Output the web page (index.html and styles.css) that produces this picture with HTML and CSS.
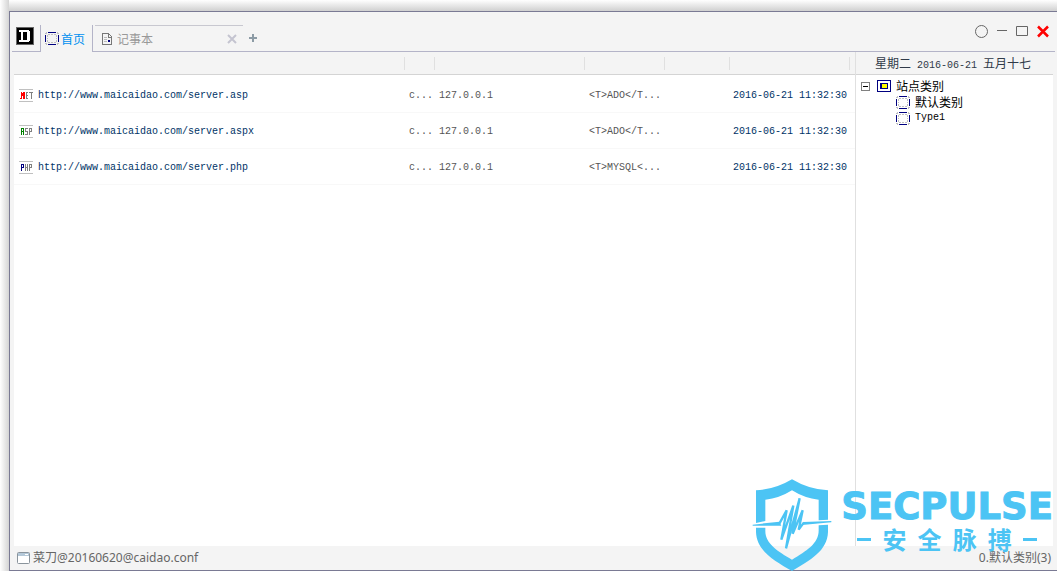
FILE: index.html
```html
<!DOCTYPE html>
<html lang="zh-CN">
<head>
  <meta charset="UTF-8" />
  <title>菜刀</title>
  <link rel="stylesheet" href="styles.css">
</head>
<body>

  <!-- shared icons -->
  <svg class="defs" aria-hidden="true">
    <symbol id="dotted" viewBox="0 0 14 13" shape-rendering="crispEdges">
      <path d="M3 .5h8M3 12.500h8M.5 3v7M13.500 3v7" stroke="#000080" fill="none" />
      <path d="M1 .5h1M12 .5h1M1 12.500h1M12 12.500h1M0 1.500h2M12 1.500h2M0 11.500h2M12 11.500h2M3 2.500h2M6 2.500h2M9 2.500h2M3 10.500h2M6 10.500h2M9 10.500h2M2.500 3v2M2.500 6v1M2.500 8v2M11.500 3v2M11.500 6v1M11.500 8v2" stroke="#c0c0c0" fill="none" />
    </symbol>
  </svg>

  <div class="window">
    <header class="titlebar">
      <button class="app-btn" aria-label="菜单">
        <svg width="18" height="18" viewBox="0 0 18 18" shape-rendering="crispEdges">
          <path d="M0 0h18v18H0z" fill="#666" />
          <path d="M1 1h16v16H1z" />
          <path d="M3 3h10v1h1v10h-1v1H3v-2h2V5H3zM7 5v8h4V5z" fill="#fff" fill-rule="evenodd" />
        </svg>
      </button>
      <nav class="tabs">
        <button class="tab tab-home">
          <svg width="14" height="13"><use href="#dotted" /></svg>首页
        </button>
        <div class="tab-strip">
          <div class="tab tab-note">
            <button class="tab-name">
              <svg width="10" height="12" viewBox="0 0 10 12" shape-rendering="crispEdges">
                <path d="M.5 .5h6l3 3v8h-9z" fill="none" stroke="#777" />
                <path d="M6.500 1v3H9" fill="none" stroke="#777" />
                <path d="M2 4.500h3M2 6.500h3M2 8.500h3" stroke="#bbb" />
                <path d="M6 7h2v2H6z" fill="#000080" />
              </svg>记事本
            </button>
            <button class="tab-close" aria-label="关闭标签">
              <svg width="10" height="10" viewBox="0 0 10 10"><path d="M1 1l8 8M9 1l-8 8" stroke="#c4c4d0" stroke-width="2" /></svg>
            </button>
          </div>
          <button class="tab-add" aria-label="新标签">
            <svg width="8" height="8" viewBox="0 0 8 8" shape-rendering="crispEdges"><path d="M4 0v8M0 4h8" stroke="#8c9ba5" stroke-width="2" /></svg>
          </button>
        </div>
      </nav>
      <div class="controls">
        <button aria-label="置顶"><svg width="13" height="13" viewBox="0 0 13 13"><circle cx="6.500" cy="6.500" r="6" fill="none" stroke="#666" /></svg></button>
        <button aria-label="最小化"><svg width="10" height="13" viewBox="0 0 10 13"><path d="M0 5.500h10" stroke="#666" /></svg></button>
        <button aria-label="最大化"><svg width="12" height="13" viewBox="0 0 12 13"><path d="M.5 1.500h11v9H.5z" fill="none" stroke="#666" /></svg></button>
        <button aria-label="关闭"><svg width="12" height="13" viewBox="0 0 12 13"><path d="M1 1.500l10 10M11 1.500l-10 10" stroke="#f00" stroke-width="2.500" /></svg></button>
      </div>
    </header>

    <main class="content">
      <section class="list">
        <table>
          <colgroup>
            <col>
            <col class="c-note">
            <col class="c-ip">
            <col class="c-conf">
            <col class="c-type">
            <col class="c-time">
            <col class="c-end">
          </colgroup>
          <thead>
            <tr><th></th><th></th><th></th><th></th><th></th><th></th><th></th></tr>
          </thead>
          <tbody>
            <tr>
              <td><div class="site">
                <svg width="14" height="14" viewBox="0 0 14 14" shape-rendering="crispEdges">
                  <path d="M0 .5h14M0 12.500h14" stroke="#c0c0c0" />
                  <path d="M1 9h1v1H1zM2 3h1v7H2zM3 4h1v3H3zM4 3h2v7H4z" fill="#f00" />
                  <path d="M9 3.500H7.500v6H9M7 6.500h2M10 3.500h4M12.500 3v7" stroke="#808080" fill="none" />
                </svg>
                <a href="#">http://www.maicaidao.com/server.asp</a>
              </div></td>
              <td>c...</td><td>127.0.0.1</td><td>&lt;T&gt;ADO&lt;/T...</td><td></td><td class="time">2016-06-21 11:32:30</td><td></td>
            </tr>
            <tr>
              <td><div class="site">
                <svg width="14" height="14" viewBox="0 0 14 14" shape-rendering="crispEdges">
                  <path d="M0 .5h14M0 12.500h14" stroke="#c0c0c0" />
                  <path d="M2.500 10V3.500h2V10M2 6.500h3" stroke="#008000" fill="none" />
                  <path d="M9 3.500H6.500v3h2v3H6M10.500 10V3.500h2v3h-2" stroke="#808080" fill="none" />
                </svg>
                <a href="#">http://www.maicaidao.com/server.aspx</a>
              </div></td>
              <td>c...</td><td>127.0.0.1</td><td>&lt;T&gt;ADO&lt;/T...</td><td></td><td class="time">2016-06-21 11:32:30</td><td></td>
            </tr>
            <tr>
              <td><div class="site">
                <svg width="14" height="14" viewBox="0 0 14 14" shape-rendering="crispEdges">
                  <path d="M0 .5h14M0 12.500h14" stroke="#c0c0c0" />
                  <path d="M2.500 10V3.500h2v3h-2" stroke="#000080" fill="none" />
                  <path d="M6.500 3v7M8.500 3v7M6 6.500h3M10.500 10V3.500h2v3h-2" stroke="#808080" fill="none" />
                </svg>
                <a href="#">http://www.maicaidao.com/server.php</a>
              </div></td>
              <td>c...</td><td>127.0.0.1</td><td>&lt;T&gt;MYSQL&lt;...</td><td></td><td class="time">2016-06-21 11:32:30</td><td></td>
            </tr>
          </tbody>
        </table>
      </section>

      <aside class="side">
        <div class="date">星期二<span class="mono"> 2016-06-21 </span>五月十七</div>
        <ul class="tree">
          <li>
            <button class="toggle" aria-label="折叠">
              <svg width="9" height="9" viewBox="0 0 9 9" shape-rendering="crispEdges"><path d="M.5 .5h8v8h-8z" fill="#fff" stroke="#808080" /><path d="M2 4.500h5" stroke="#000" /></svg>
            </button>
            <svg width="14" height="12" viewBox="0 0 14 12" shape-rendering="crispEdges"><path d="M.5 .5h13v11H.5z" fill="#fff" stroke="#000080" /><path d="M3 3h8v6H3z" fill="#000080" /><path d="M5 4h5v4H5z" fill="#ff0" /></svg>
            <span>站点类别</span>
          </li>
          <li class="child"><svg width="14" height="13"><use href="#dotted" /></svg><span>默认类别</span></li>
          <li class="child"><svg width="14" height="13"><use href="#dotted" /></svg><span class="mono">Type1</span></li>
        </ul>
      </aside>
    </main>

    <footer class="status">
      <svg width="13" height="12" viewBox="0 0 13 12"><rect x=".5" y=".5" width="12" height="11" rx="1" fill="#fff" stroke="#8a949c" /><path d="M1 1h11v3H1z" fill="#b4c8d8" /><path d="M8 2.500h3" stroke="#fff" /></svg>
      <span>菜刀@20160620@caidao.conf</span>
      <span class="count">0.默认类别(3)</span>
    </footer>

    <div class="watermark">
      <svg width="80" height="92" viewBox="36 26 240 276" fill="#4cc4f4">
        <path d="M48 60Q104 58 156 27Q208 58 264 60V148L236 150V88Q194 84 156 60Q118 84 76 88V152L48 158z" />
        <path d="M48 172H76V182C76 220 112 242 156 268C200 242 236 220 236 180V165L264 163V185C262 242 210 270 156 302C102 270 50 242 48 185z" />
        <path d="M38 163L118 154L124 166L38 166zM274 152L190 155L186 164L274 156z" />
        <path d="M118 160L140 120L124 208L160 106L138 234L179 84L158 190L188 120L176 178L192 156" fill="none" stroke="#4cc4f4" stroke-width="7" stroke-linejoin="bevel" />
      </svg>
      <div class="brand">
        <div class="brand-en">SECPULSE</div>
        <div class="brand-cn"><i></i><span>安</span><span>全</span><span>脉</span><span>搏</span><i></i></div>
      </div>
    </div>
  </div>

</body>
</html>
```

FILE: styles.css
```css
* {
  box-sizing: border-box;
}

body {
  margin: 0;
  height: 100vh;
  padding: 11px 0 0 9px;
  display: flex;
  overflow: hidden;
  background:
    linear-gradient(to right, #fff, #d4d4d4) left / 9px 100% no-repeat,
    linear-gradient(#fff, #d0d0d0) top / 100% 11px no-repeat;
  font: 12px/16px "Noto Sans CJK SC", sans-serif;
  color: #000;
}

button {
  padding: 0;
  border: none;
  background: none;
  font: inherit;
  color: inherit;
  cursor: pointer;
}

svg {
  display: block;
  flex: none;
}

.defs {
  position: absolute;
  width: 0;
  height: 0;
}

.mono {
  font: 10px/16px "Liberation Mono", monospace;
  white-space: pre;
}

.window {
  position: relative;
  flex: 1;
  min-width: 0;
  display: flex;
  flex-direction: column;
  background: #f4f4f4;
  border: 1px solid #7a7a94;
  border-right: none;
}

/* title bar */
.titlebar {
  display: flex;
  align-items: flex-end;
  height: 40px;
  margin: 0 2px;
  position: relative;
}

.app-btn {
  width: 29px;
  height: 27px;
  padding: 2px 4px 6px;
  border-right: 1px solid #b4b4c8;
  border-bottom: 1px solid #b4b4c8;
}

.tabs {
  flex: 1;
  display: flex;
}

.tab-home {
  display: flex;
  align-items: center;
  gap: 2px;
  width: 51px;
  height: 27px;
  padding-left: 4px;
  color: #0090f0;
}

.tab-strip {
  flex: 1;
  display: flex;
  height: 27px;
  padding-left: 2px;
  border-left: 1px solid #b4b4c8;
  border-bottom: 1px solid #b4b4c8;
}

.tab-note {
  display: flex;
  align-items: center;
  justify-content: space-between;
  width: 148px;
  padding: 0 6px 0 7px;
  border-top: 1px solid #c8c8d0;
  color: #999;
}

.tab-name {
  display: flex;
  align-items: center;
  gap: 5px;
}

.tab-add {
  padding-left: 6px;
}

.controls {
  position: absolute;
  top: 13px;
  right: 6px;
  display: flex;
  gap: 9px;
}

/* site list */
.content {
  flex: 1;
  display: flex;
  margin: 0 4px;
  background: #fff;
}

.list {
  flex: 1;
  min-width: 0;
}

table {
  width: 100%;
  table-layout: fixed;
  border-collapse: separate;
  border-spacing: 0;
  font: 10px/16px "Liberation Mono", monospace;
  color: #555;
}

.c-note { width: 30px; }
.c-ip { width: 150px; }
.c-conf { width: 80px; }
.c-type { width: 65px; }
.c-time { width: 120px; }
.c-end { width: 5px; }

th {
  height: 23px;
  padding: 0;
  background: linear-gradient(#e0e0e0, #e0e0e0) right center / 1px 13px no-repeat #f4f4f4;
  border-bottom: 1px solid #d4d4d4;
}

th:last-child {
  background: #f4f4f4;
}

td {
  height: 36px;
  padding: 3px 0 0 4px;
  border-bottom: 1px solid #f8f8f8;
  white-space: nowrap;
}

tbody tr:first-child td {
  height: 38px;
  padding-top: 5px;
}

.site {
  display: flex;
  align-items: center;
  gap: 5px;
  padding-left: 1px;
}

.site a {
  color: #003366;
  text-decoration: none;
}

.time {
  padding-left: 3px;
  color: #003366;
}

/* category tree */
.side {
  width: 198px;
  border-left: 1px solid #e0e0e0;
}

.date {
  height: 23px;
  padding: 3px 0 0 19px;
  background: #f4f4f4;
  border-bottom: 1px solid #d4d4d4;
  color: #303a48;
  white-space: nowrap;
}

.tree {
  margin: 0;
  padding: 3px 0 0 5px;
  list-style: none;
}

.tree li {
  display: flex;
  align-items: center;
  height: 16px;
}

.tree li span {
  margin-left: 5px;
}

.toggle {
  margin-right: 7px;
}

.tree .child {
  padding-left: 35px;
}

.child svg {
  margin-top: 1px;
}

/* status bar */
.status {
  display: flex;
  align-items: center;
  gap: 3px;
  height: 24px;
  padding: 0 6px 0 7px;
  font-family: "Noto Sans", "Noto Sans CJK SC", sans-serif;
  color: #666;
}

.count {
  margin-left: auto;
}

.watermark {
  position: absolute;
  right: 4px;
  bottom: -1px;
  display: flex;
  gap: 9px;
  color: #4cc4f4;
  pointer-events: none;
}

.brand-en {
  margin-top: 10px;
  font: bold 37px/36px "DejaVu Sans", sans-serif;
  -webkit-text-stroke: 1px #4cc4f4;
}

.brand-cn {
  display: flex;
  align-items: center;
  justify-content: space-between;
  padding: 0 16px;
  font-size: 24px;
  font-weight: bold;
  line-height: 28px;
}

.brand-cn i {
  width: 14px;
  height: 3px;
  background: #4cc4f4;
}
```
